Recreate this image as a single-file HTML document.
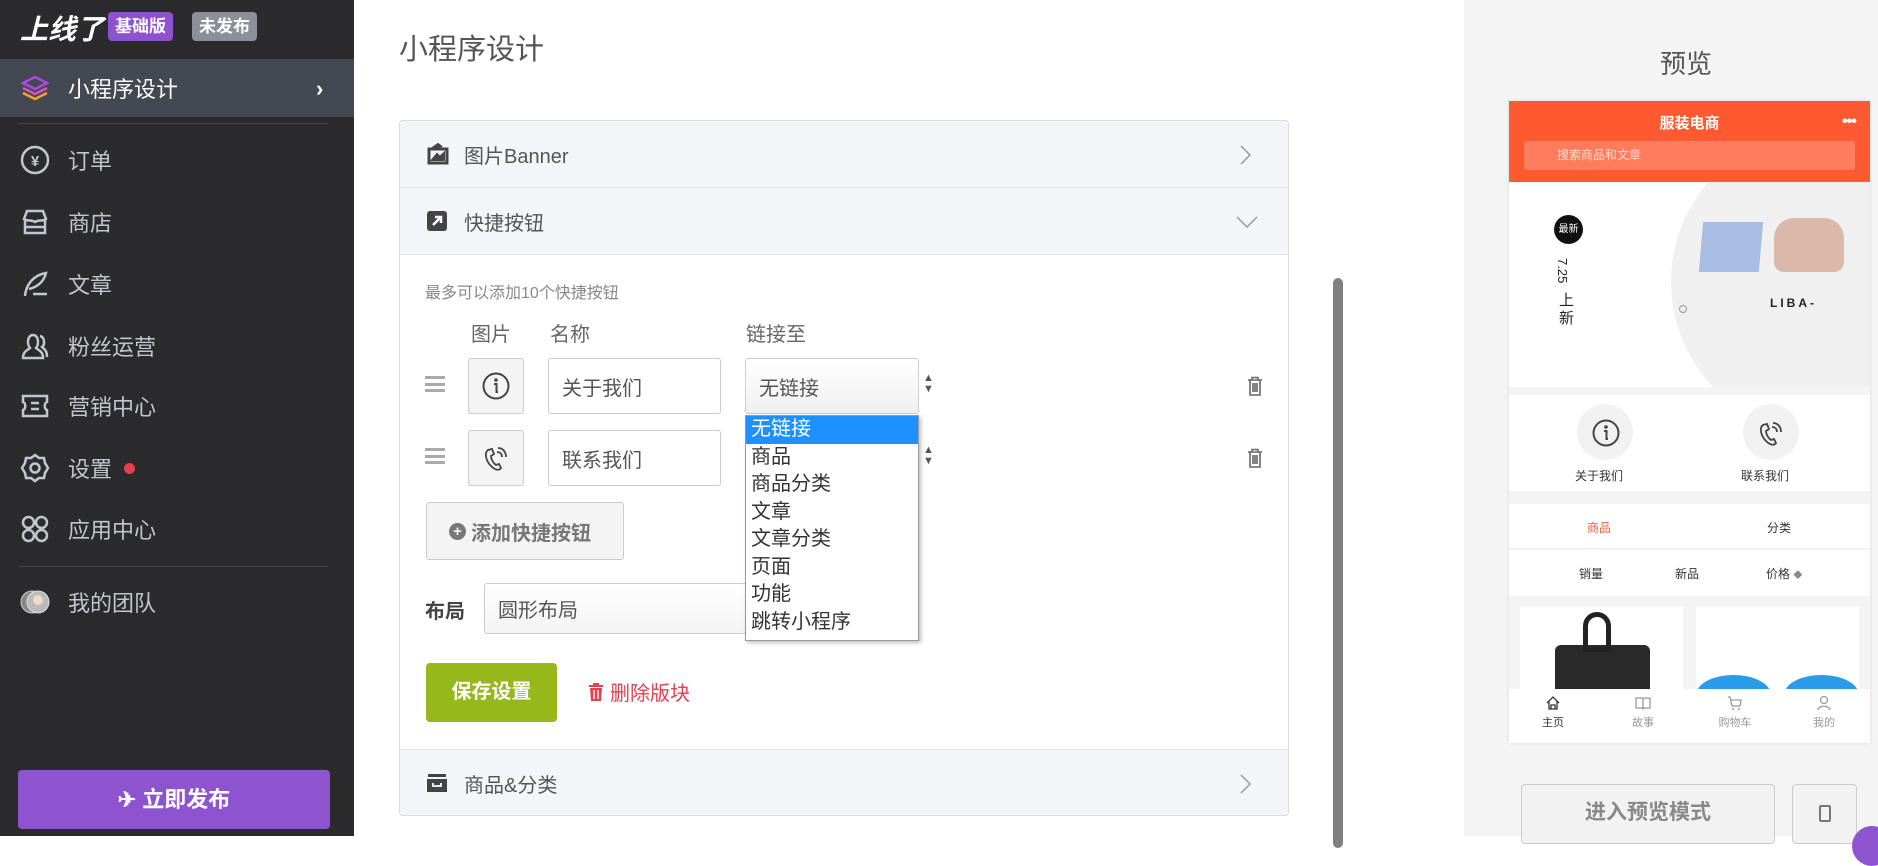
<!DOCTYPE html>
<html><head><meta charset="utf-8"><style>
*{box-sizing:border-box;margin:0;padding:0}
body{width:1878px;height:836px;overflow:hidden;background:#fff;font-family:"Liberation Sans","Noto Sans CJK SC",sans-serif;position:relative;color:#555}
.abs{position:absolute}
#side{left:0;top:0;width:354px;height:836px;background:#2b2b2e}
.nav{position:absolute;left:20px;height:40px;display:flex;align-items:center;color:#c3c6cc;font-size:22px}
.nav svg{width:30px;height:30px;margin-right:18px}
.badge{position:absolute;top:12px;height:29px;border-radius:4px;color:#fff;font-weight:bold;font-size:17px;line-height:29px;padding:0 7px}
#main .hdr{position:absolute;left:0;right:0;height:67px;background:#f4f5f8;border-bottom:1px solid #e2e2e2;display:flex;align-items:center;padding-left:26px;font-size:20px;color:#555}
.inp{position:absolute;border:1px solid #ccc;border-radius:3px;background:#fff;font-size:20px;color:#555;display:flex;align-items:center;padding-left:13px}
.dd div{height:27.5px;line-height:27.5px;font-size:20px;color:#333;padding-left:5px}
.tb{position:absolute;top:594px;width:60px;text-align:center;font-size:11px;color:#999}
.tb svg{display:block;margin:0 auto 3px}
</style></head><body>
<div id="side" class="abs">
  <div class="abs" style="left:20px;top:8px;font-size:28px;font-weight:bold;font-style:italic;color:#fff">上线了</div>
  <div class="badge" style="left:108px;background:#8e52cc">基础版</div>
  <div class="badge" style="left:192px;background:#8a8f99">未发布</div>
  <div class="abs" style="left:0;top:59px;width:354px;height:58px;background:#444852"></div>
  <div class="nav" style="top:68px;color:#fff"><svg viewBox="0 0 30 30"><path d="M15 4 L27 10 L15 16 L3 10Z" fill="none" stroke="#a64de0" stroke-width="2.5"/><path d="M3 15 L15 21 L27 15" fill="none" stroke="#e24fc0" stroke-width="2.5"/><path d="M3 20 L15 26 L27 20" fill="none" stroke="#f5a623" stroke-width="2.5"/></svg>小程序设计</div>
  <div class="abs" style="left:316px;top:76px;color:#fff;font-size:22px;font-weight:bold">›</div>
  <div class="abs" style="left:18px;top:123px;width:310px;height:1px;background:#444"></div>
  <div class="nav" style="top:140px"><svg viewBox="0 0 30 30"><circle cx="15" cy="15" r="13" fill="none" stroke="#c3c6cc" stroke-width="2.5"/><text x="15" y="21" font-size="15" text-anchor="middle" fill="#c3c6cc" font-weight="bold">¥</text></svg>订单</div>
  <div class="nav" style="top:202px"><svg viewBox="0 0 30 30"><path d="M4 12 L7 4 H23 L26 12 C22 15 19 12 15 15 C11 12 8 15 4 12Z M5 13 V26 H25 V13 M5 20 H25" fill="none" stroke="#c3c6cc" stroke-width="2.5"/></svg>商店</div>
  <div class="nav" style="top:264px"><svg viewBox="0 0 30 30"><path d="M5 27 C6 15 14 6 26 4 C24 12 18 18 9 20 M13 25 H27" fill="none" stroke="#c3c6cc" stroke-width="2.5"/></svg>文章</div>
  <div class="nav" style="top:326px"><svg viewBox="0 0 30 30"><path d="M3 27 C3 20 8 19 10 17 C7 14 7 4 13 4 C19 4 19 14 16 17 C18 19 23 20 23 27Z M20 5 C25 6 25 14 22 16 C24 18 27 19 27 26" fill="none" stroke="#c3c6cc" stroke-width="2.5"/></svg>粉丝运营</div>
  <div class="nav" style="top:386px"><svg viewBox="0 0 30 30"><path d="M3 5 H27 V11 C24 12 24 18 27 19 V25 H3 V19 C6 18 6 12 3 11Z M11 12 H19 M11 18 H19" fill="none" stroke="#c3c6cc" stroke-width="2.5"/></svg>营销中心</div>
  <div class="nav" style="top:448px"><svg viewBox="0 0 30 30"><path d="M15 2 L19 5 L24 5 L25 10 L28 15 L25 20 L24 25 L19 25 L15 28 L11 25 L6 25 L5 20 L2 15 L5 10 L6 5 L11 5Z" fill="none" stroke="#c3c6cc" stroke-width="2.5"/><circle cx="15" cy="15" r="4.5" fill="none" stroke="#c3c6cc" stroke-width="2.5"/></svg>设置<span style="display:inline-block;width:11px;height:11px;border-radius:50%;background:#e5404f;margin-left:12px"></span></div>
  <div class="nav" style="top:509px"><svg viewBox="0 0 30 30"><g fill="none" stroke="#c3c6cc" stroke-width="2.5"><circle cx="8.5" cy="8.5" r="5.5"/><circle cx="21.5" cy="8.5" r="5.5"/><circle cx="8.5" cy="21.5" r="5.5"/><circle cx="21.5" cy="21.5" r="5.5"/></g></svg>应用中心</div>
  <div class="abs" style="left:18px;top:566px;width:310px;height:1px;background:#444"></div>
  <div class="nav" style="top:582px"><svg viewBox="0 0 30 30"><circle cx="12" cy="15" r="11" fill="#888" stroke="#ccc"/><circle cx="18" cy="15" r="11" fill="#bbb" stroke="#ddd"/><circle cx="18" cy="13" r="5" fill="#f3d9c9"/></svg>我的团队</div>
  <div class="abs" style="left:18px;top:770px;width:312px;height:59px;background:#8e54cf;border-radius:4px;color:#fff;font-size:22px;font-weight:bold;text-align:center;line-height:59px">✈ 立即发布</div>
</div>

<div class="abs" style="left:399px;top:26px;font-size:29px;color:#555">小程序设计</div>

<div id="main" class="abs" style="left:399px;top:120px;width:890px;height:696px;border:1px solid #ddd;border-radius:4px;overflow:hidden">
  <div class="hdr" style="top:0"><svg width="24" height="22" viewBox="0 0 24 22" style="margin-right:14px"><rect x="3" y="6" width="18" height="14" fill="none" stroke="#444" stroke-width="3"/><path d="M6 17 L11 11 L14 14 L18 10 V17Z M5 6 L12 1 L16 4" fill="#444" stroke="#444" stroke-width="2"/></svg>图片Banner<svg style="position:absolute;right:36px;top:24px" width="12" height="20" viewBox="0 0 12 20"><path d="M1 1 L10 10 L1 19" fill="none" stroke="#999" stroke-width="1.5"/></svg></div>
  <div class="hdr" style="top:67px"><svg width="22" height="22" viewBox="0 0 22 22" style="margin-right:16px"><rect x="1" y="1" width="20" height="20" rx="3" fill="#444"/><path d="M7 15 L15 7 M9 7 H15 V13" stroke="#fff" stroke-width="2.5" fill="none"/></svg>快捷按钮<svg style="position:absolute;right:30px;top:28px" width="22" height="12" viewBox="0 0 22 12"><path d="M1 1 L11 11 L21 1" fill="none" stroke="#999" stroke-width="1.5"/></svg></div>
  <div class="abs" style="left:25px;top:158px;font-size:16px;color:#888">最多可以添加10个快捷按钮</div>
  <div class="abs" style="left:71px;top:197px;font-size:20px;color:#666">图片</div>
  <div class="abs" style="left:150px;top:197px;font-size:20px;color:#666">名称</div>
  <div class="abs" style="left:346px;top:197px;font-size:20px;color:#666">链接至</div>
  <div class="abs" style="left:25px;top:255px;width:20px;height:16px;border-top:3px solid #aaa;border-bottom:3px solid #aaa"><div style="margin-top:4px;height:3px;background:#aaa"></div></div>
  <div class="abs" style="left:25px;top:327px;width:20px;height:16px;border-top:3px solid #aaa;border-bottom:3px solid #aaa"><div style="margin-top:4px;height:3px;background:#aaa"></div></div>
  <div class="inp" style="left:68px;top:237px;width:56px;height:56px;background:#f4f4f4;padding:0;justify-content:center"><svg width="30" height="30" viewBox="0 0 30 30"><circle cx="15" cy="15" r="12.5" fill="none" stroke="#444" stroke-width="2"/><circle cx="15" cy="9" r="1.8" fill="#444"/><path d="M13 13 H15.5 V21 H17" fill="none" stroke="#444" stroke-width="2"/></svg></div>
  <div class="inp" style="left:68px;top:309px;width:56px;height:56px;background:#f4f4f4;padding:0;justify-content:center"><svg width="28" height="30" viewBox="0 0 28 30"><path d="M6 7 C2 10 4 18 9 23 C13 27 17 28 19 25 L17 21 L14 22 C11 20 9 16 9 13 L12 11 L10 6Z M15 9 C18 9 20 11 20 14 M16 5 C21 5 24 9 24 14" fill="none" stroke="#444" stroke-width="1.8"/></svg></div>
  <div class="inp" style="left:148px;top:237px;width:173px;height:56px">关于我们</div>
  <div class="inp" style="left:148px;top:309px;width:173px;height:56px">联系我们</div>
  <div class="inp" style="left:345px;top:237px;width:174px;height:56px;background:linear-gradient(#fff,#f0f0f0)">无链接</div>
  <div class="abs" style="left:523px;top:252px;font-size:11px;line-height:11px;color:#555">▲<br>▼</div>
  <div class="abs" style="left:523px;top:324px;font-size:11px;line-height:11px;color:#555">▲<br>▼</div>
  <svg class="abs" style="left:847px;top:255px" width="16" height="20" viewBox="0 0 16 20"><path d="M1 4 H15 M5 4 V1.5 H11 V4 M3 4 V19 H13 V4 M6 7 V16 M8 7 V16 M10 7 V16" fill="none" stroke="#666" stroke-width="1.6"/></svg>
  <svg class="abs" style="left:847px;top:327px" width="16" height="20" viewBox="0 0 16 20"><path d="M1 4 H15 M5 4 V1.5 H11 V4 M3 4 V19 H13 V4 M6 7 V16 M8 7 V16 M10 7 V16" fill="none" stroke="#666" stroke-width="1.6"/></svg>
  <div class="inp" style="left:26px;top:381px;width:198px;height:58px;background:#f4f4f4;font-weight:bold;color:#777;padding-left:22px"><span style="display:inline-block;width:17px;height:17px;border-radius:50%;background:#777;color:#f4f4f4;font-size:15px;line-height:17px;text-align:center;margin-right:5px">+</span>添加快捷按钮</div>
  <div class="abs" style="left:25px;top:474px;font-size:20px;font-weight:bold;color:#444">布局</div>
  <div class="inp" style="left:84px;top:462px;width:290px;height:51px;background:linear-gradient(#fff,#f3f3f3)">圆形布局</div>
  <div class="abs" style="left:26px;top:542px;width:131px;height:59px;background:#96b81a;border-radius:4px;color:#fff;font-weight:bold;font-size:20px;text-align:center;line-height:59px">保存设置</div>
  <svg class="abs" style="left:188px;top:561px" width="16" height="20" viewBox="0 0 16 20"><path d="M1 3 H15 V5 H1Z M5 3 V1 H11 V3 M2 6 H14 L13 19 H3Z" fill="#e5404f"/><path d="M6 8 V17 M10 8 V17" stroke="#fff" stroke-width="1.4"/></svg>
  <div class="abs" style="left:210px;top:556px;font-size:20px;color:#e5404f">删除版块</div>
  <div class="hdr" style="top:628px;border-top:1px solid #e2e2e2;border-bottom:none"><svg width="22" height="20" viewBox="0 0 22 20" style="margin-right:16px"><rect x="2" y="1" width="18" height="3" fill="#444"/><path d="M1 6 H21 V19 H1Z" fill="#444"/><path d="M7 10 V13 H15 V10" stroke="#fff" stroke-width="1.8" fill="none"/></svg>商品&amp;分类<svg style="position:absolute;right:36px;top:24px" width="12" height="20" viewBox="0 0 12 20"><path d="M1 1 L10 10 L1 19" fill="none" stroke="#999" stroke-width="1.5"/></svg></div>
  <div class="abs dd" style="left:345px;top:294px;width:174px;height:226px;background:#fff;border:1px solid #999;box-shadow:2px 2px 4px rgba(0,0,0,.25)">
    <div style="background:#1e90ff;color:#fff">无链接</div><div>商品</div><div>商品分类</div><div>文章</div><div>文章分类</div><div>页面</div><div>功能</div><div>跳转小程序</div>
  </div>
</div>

<div class="abs" style="left:1333px;top:278px;width:10px;height:570px;background:#808080;border-radius:5px"></div>

<div class="abs" style="left:1464px;top:0;width:414px;height:836px;background:#f4f4f4"></div>
<div class="abs" style="left:1660px;top:44px;font-size:26px;color:#555">预览</div>
<div class="abs" style="left:1509px;top:101px;width:361px;height:642px;background:#f4f4f4;box-shadow:0 0 4px rgba(0,0,0,.1);overflow:hidden">
  <div class="abs" style="left:0;top:0;width:361px;height:81px;background:#fe5a32"></div>
  <div class="abs" style="left:0;top:11px;width:361px;text-align:center;color:#fff;font-weight:bold;font-size:15px">服装电商</div>
  <div class="abs" style="left:333px;top:12px;color:#fff;font-size:16px;font-weight:bold;letter-spacing:-1px">•••</div>
  <div class="abs" style="left:15px;top:40px;width:331px;height:29px;background:#ff7c5c;border-radius:3px;color:#ffd9cc;font-size:12px;line-height:29px;padding-left:33px">搜索商品和文章</div>
  <div class="abs" style="left:0;top:81px;width:361px;height:205px;background:#fff;overflow:hidden">
    <div class="abs" style="left:162px;top:-60px;width:340px;height:320px;border-radius:50%;background:#f0f0f0"></div>
    <div class="abs" style="left:45px;top:33px;width:29px;height:29px;border-radius:50%;background:#111;color:#fff;font-size:10px;text-align:center;line-height:29px">最新</div>
    <div class="abs" style="left:46px;top:76px;font-size:13px;color:#222;writing-mode:vertical-rl">7.25</div>
    <div class="abs" style="left:50px;top:110px;font-size:15px;color:#222;line-height:18px">上<br>新</div>
    <div class="abs" style="left:192px;top:40px;width:60px;height:50px;background:#a9bce2;transform:skewX(-5deg)"></div>
    <div class="abs" style="left:265px;top:36px;width:70px;height:54px;background:#dcb8a8;border-radius:20px 20px 10px 10px"></div>
    <div class="abs" style="left:261px;top:114px;font-size:12px;font-weight:bold;letter-spacing:3px;color:#222">LIBA-</div>
    <div class="abs" style="left:170px;top:123px;width:8px;height:8px;border:1px solid #999;border-radius:50%"></div>
  </div>
  <div class="abs" style="left:0;top:294px;width:361px;height:96px;background:#fff"></div>
  <div class="abs" style="left:68px;top:303px;width:56px;height:56px;border-radius:50%;background:#f1f1f1"></div>
  <div class="abs" style="left:234px;top:303px;width:56px;height:56px;border-radius:50%;background:#f1f1f1"></div>
  <svg class="abs" style="left:82px;top:317px" width="30" height="30" viewBox="0 0 30 30"><circle cx="15" cy="15" r="12.5" fill="none" stroke="#444" stroke-width="2"/><circle cx="15" cy="9" r="1.8" fill="#444"/><path d="M13 13 H15.5 V21 H17" fill="none" stroke="#444" stroke-width="2"/></svg>
  <svg class="abs" style="left:248px;top:317px" width="28" height="30" viewBox="0 0 28 30"><path d="M6 7 C2 10 4 18 9 23 C13 27 17 28 19 25 L17 21 L14 22 C11 20 9 16 9 13 L12 11 L10 6Z M15 9 C18 9 20 11 20 14 M16 5 C21 5 24 9 24 14" fill="none" stroke="#444" stroke-width="1.8"/></svg>
  <div class="abs" style="left:66px;top:366px;font-size:12px;color:#333">关于我们</div>
  <div class="abs" style="left:232px;top:366px;font-size:12px;color:#333">联系我们</div>
  <div class="abs" style="left:0;top:403px;width:361px;height:45px;background:#fff;border-bottom:1px solid #eee"></div>
  <div class="abs" style="left:78px;top:418px;font-size:12px;color:#fe5a32">商品</div>
  <div class="abs" style="left:258px;top:418px;font-size:12px;color:#333">分类</div>
  <div class="abs" style="left:0;top:449px;width:361px;height:46px;background:#fff"></div>
  <div class="abs" style="left:70px;top:464px;font-size:12px;color:#333">销量</div>
  <div class="abs" style="left:166px;top:464px;font-size:12px;color:#333">新品</div>
  <div class="abs" style="left:257px;top:464px;font-size:12px;color:#333">价格 <span style="color:#888;font-size:9px">◆</span></div>
  <div class="abs" style="left:11px;top:506px;width:163px;height:85px;background:#fff;overflow:hidden"><div style="position:absolute;left:35px;top:38px;width:95px;height:60px;background:#2a2a2a;border-radius:6px 6px 0 0"></div><div style="position:absolute;left:63px;top:5px;width:28px;height:40px;border:5px solid #222;border-radius:14px 14px 0 0"></div></div>
  <div class="abs" style="left:187px;top:506px;width:163px;height:85px;background:#fff;overflow:hidden"><div style="position:absolute;left:0;top:68px;width:75px;height:40px;border-radius:50%;background:#2a9be8"></div><div style="position:absolute;left:88px;top:68px;width:75px;height:40px;border-radius:50%;background:#2a9be8"></div></div>
  <div class="abs" style="left:0;top:588px;width:361px;height:54px;background:#fff"></div>
  <div class="tb" style="left:14px;color:#333"><svg width="16" height="16" viewBox="0 0 16 16"><path d="M2 8 L8 2 L14 8 M4 6 V14 H12 V6 M6 14 V10 H10 V14" fill="none" stroke="#333" stroke-width="1.3"/></svg>主页</div>
  <div class="tb" style="left:104px"><svg width="16" height="16" viewBox="0 0 16 16"><path d="M1 3 H7 L8 4 L9 3 H15 V13 H9 L8 14 L7 13 H1Z M8 4 V14" fill="none" stroke="#999" stroke-width="1.3"/></svg>故事</div>
  <div class="tb" style="left:196px"><svg width="16" height="16" viewBox="0 0 16 16"><path d="M1 2 H3 L5 11 H13 L14 5 H4" fill="none" stroke="#999" stroke-width="1.3"/><circle cx="6" cy="14" r="1" fill="#999"/><circle cx="12" cy="14" r="1" fill="#999"/></svg>购物车</div>
  <div class="tb" style="left:285px"><svg width="16" height="16" viewBox="0 0 16 16"><circle cx="8" cy="5" r="3.5" fill="none" stroke="#999" stroke-width="1.3"/><path d="M2 15 C2 10 14 10 14 15" fill="none" stroke="#999" stroke-width="1.3"/></svg>我的</div>
</div>
<div class="abs" style="left:1521px;top:784px;width:254px;height:60px;border:1px solid #ccc;border-radius:4px;background:#f2f2f2;color:#888;font-weight:bold;font-size:21px;text-align:center;line-height:56px">进入预览模式</div>
<div class="abs" style="left:1792px;top:784px;width:65px;height:60px;border:1px solid #ccc;border-radius:4px;background:#f2f2f2"><div style="margin:20px auto;width:12px;height:17px;border:2px solid #777;border-radius:2px"></div></div>
<div class="abs" style="left:1852px;top:826px;width:40px;height:40px;border-radius:50%;background:#8e54cf"></div>
</body></html>
